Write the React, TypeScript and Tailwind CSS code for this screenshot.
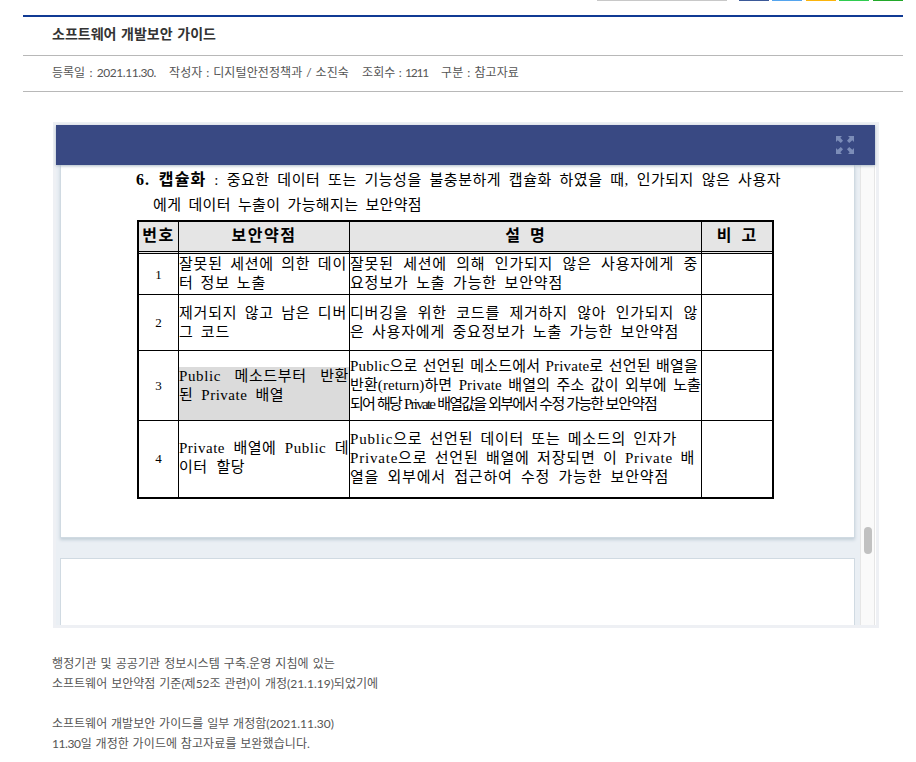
import type { ReactNode } from 'react';

function Line({ className = '', children }: { className?: string; children: ReactNode }) {
  return <div className={`whitespace-nowrap text-justify [text-align-last:justify] ${className}`}>{children}</div>;
}

function Heading({ children }: { children: ReactNode }) {
  return (
    <div className="flex items-center justify-center border-r border-b-3 border-r-black [border-bottom-style:double] border-b-black bg-[#e5e5e5] pb-0.5 text-[16px] font-bold last:border-r-0">
      {children}
    </div>
  );
}

const cell = 'flex flex-col justify-center border-r border-b border-black';
const lastCell = 'border-b border-black';

function ExpandIcon() {
  return (
    <svg width="18" height="18" viewBox="0 0 18 18" fill="#7c8db8">
      <path d="M0 0h6L4.3 1.7 7 4.8 4.8 7 1.7 4.3 0 6z" />
      <path d="M18 0v6l-1.7-1.7L13.2 7 11 4.8l2.7-3.1L12 0z" />
      <path d="M0 18v-6l1.7 1.7L4.8 11 7 13.2l-2.7 3.1L6 18z" />
      <path d="M18 18h-6l1.7-1.7-2.7-3.1 2.2-2.2 3.1 2.7L18 12z" />
    </svg>
  );
}

export default function App() {
  return (
    <div className="h-[762px] w-[916px] overflow-hidden bg-white font-['Lato','Noto_Sans_CJK_KR',sans-serif] text-[#555]">
      <div className="flex h-[15px] items-start pl-[597px]">
        <div className="mr-3 h-px w-[130px] bg-[#c8c8c8]" />
        <div className="mr-[3px] h-px w-[30px] bg-[#3b5998]" />
        <div className="mr-1 h-px w-[30px] bg-[#55a5ee]" />
        <div className="mr-[3px] h-px w-[30px] bg-[#fbb40c]" />
        <div className="mr-1 h-px w-[30px] bg-[#2fcc50]" />
        <div className="h-px w-[30px] bg-[#22a82a]" />
      </div>
      <header className="ml-[23px] w-[880px] border-t-2 border-[#103a94]">
        <h1 className="flex h-[39px] items-center border-b border-[#b8b8b8] pb-[5px] pl-[29px] text-[14px] font-bold text-[#333]">
          <Line className="w-[164px]">소프트웨어 개발보안 가이드</Line>
        </h1>
        <div className="flex h-9 items-center border-b border-[#b8b8b8] pb-0.5 pl-[29px] text-[12px]">
          <Line className="mr-[13px] w-[104px]">등록일 : <span className="tracking-[-0.45px]">2021.11.30.</span></Line>
          <Line className="mr-[13px] w-[180px] tracking-[0.1px]">작성자 : 디지털안전정책과 / 소진숙</Line>
          <Line className="mr-[13px] w-[66px] tracking-[0.1px]">조회수 : <span className="tracking-[-1.2px]">1211</span></Line>
          <Line className="w-[78px] tracking-[0.1px]">구분 : 참고자료</Line>
        </div>
      </header>

      <main className="mt-[30px] ml-[53px] h-[506px] w-[826px] border-3 border-[#eef0f4] bg-[#eaeff4]">
        <div className="relative z-10 flex h-10 w-[819px] items-center justify-end bg-[#394983] pr-[21px] shadow-[0_1px_3px_#a9b8c4]">
          <ExpandIcon />
        </div>
        <div className="flex h-[460px]">
          <div className="h-full w-[804px] overflow-hidden bg-[#eaeff4] pl-1">
            <section className="h-[373px] w-[795px] border border-t-0 border-[#d0dae2] bg-white pt-1 pl-[76px] font-['Liberation_Serif','Noto_Sans_CJK_KR',serif] text-[15px] leading-[19px] text-black shadow-[0_2px_3px_#c3cfd8]">
              <Line className="ml-[-1px] h-[25px] w-[645px] leading-[22px] tracking-[0.5px]">
                <b className="text-[16px] tracking-[1.1px]">6. 캡슐화</b> : 중요한 데이터 또는 기능성을 불충분하게 캡슐화 하였을 때, 인가되지 않은 사용자
              </Line>
              <Line className="ml-4 h-[26px] w-[269px] leading-[22px] tracking-[0.35px]">에게 데이터 누출이 가능해지는 보안약점</Line>
              <div className="grid h-[279px] w-[637px] grid-cols-[40px_171px_352px_70px] grid-rows-[32px_41px_56px_70px_76px] border-2 border-black">
                <Heading><span className="tracking-[1.5px]">번호</span></Heading>
                <Heading><span className="tracking-[1.5px]">보안약점</span></Heading>
                <Heading><span className="tracking-[1px] [word-spacing:4px]">설 명</span></Heading>
                <div className="flex items-center justify-center border-b-3 border-black [border-bottom-style:double] bg-[#e5e5e5] pb-0.5 text-[16px] font-bold">
                  <span className="tracking-[1px] [word-spacing:4px]">비 고</span>
                </div>

                <div className={`${cell} items-center text-[13px]`}>1</div>
                <div className={cell}>
                  <Line className="w-[168px] tracking-[0.8px]">잘못된 세션에 의한 데이</Line>
                  <Line className="w-[87px] tracking-[0.8px]">터 정보 노출</Line>
                </div>
                <div className={cell}>
                  <Line className="w-[348px] tracking-[0.8px]">잘못된 세션에 의해 인가되지 않은 사용자에게 중</Line>
                  <Line className="w-[213px] tracking-[0.8px]">요정보가 노출 가능한 보안약점</Line>
                </div>
                <div className={lastCell} />

                <div className={`${cell} items-center text-[13px]`}>2</div>
                <div className={cell}>
                  <Line className="w-[168px] tracking-[0.8px]">제거되지 않고 남은 디버</Line>
                  <Line className="w-[51px] tracking-[0.8px]">그 코드</Line>
                </div>
                <div className={cell}>
                  <Line className="w-[348px] tracking-[0.8px]">디버깅을 위한 코드를 제거하지 않아 인가되지 않</Line>
                  <Line className="w-[329px] tracking-[0.8px]">은 사용자에게 중요정보가 노출 가능한 보안약점</Line>
                </div>
                <div className={lastCell} />

                <div className={`${cell} items-center text-[13px]`}>3</div>
                <div className={`${cell} bg-[linear-gradient(#fff_16px,#dbdbdb_16px)]`}>
                  <Line className="w-[170px] tracking-[0.6px]">Public 메소드부터 반환</Line>
                  <Line className="w-[105px] tracking-[0.5px]">된 Private 배열</Line>
                </div>
                <div className={cell}>
                  <Line className="w-[348px] tracking-[0.2px]">Public으로 선언된 메소드에서 Private로 선언된 배열을</Line>
                  <Line className="w-[351px] tracking-[0.1px]">반환(return)하면 Private 배열의 주소 값이 외부에 노출</Line>
                  <Line className="w-[307px] tracking-[-1.75px]">되어 해당 Private 배열값을 외부에서 수정 가능한 <span className="tracking-[-0.9px]">보안약점</span></Line>
                </div>
                <div className={lastCell} />

                <div className={`${cell} items-center border-b-0 pb-0.5 text-[13px]`}>4</div>
                <div className={`${cell} border-b-0 pb-0.5`}>
                  <Line className="w-[170px] tracking-[0.5px]">Private 배열에 Public 데</Line>
                  <Line className="w-[66px] tracking-[0.5px]">이터 할당</Line>
                </div>
                <div className={`${cell} border-b-0 pb-0.5`}>
                  <Line className="w-[327px] tracking-[0.8px]">Public으로 선언된 데이터 또는 메소드의 인자가</Line>
                  <Line className="w-[345px] tracking-[0.8px]">Private으로 선언된 배열에 저장되면 이 Private 배</Line>
                  <Line className="w-[319px] tracking-[0.8px]">열을 외부에서 접근하여 수정 가능한 보안약점</Line>
                </div>
                <div />
              </div>
            </section>
            <section className="mt-5 h-20 w-[795px] border border-[#d0dae2] bg-white" />
          </div>
          <div className="h-full w-[15px] border-x border-[#e6e6e6] bg-[#fafafa] pt-[362px] pl-[3px]">
            <div className="h-[27px] w-2 rounded-full bg-[#c1c1c1]" />
          </div>
          <div className="h-full w-px bg-white" />
        </div>
      </main>

      <article className="mt-[26px] ml-[52px] text-[12px] leading-5">
        <Line className="w-[283px] tracking-[0.1px]">행정기관 및 공공기관 정보시스템 구축.운영 지침에 있는</Line>
        <Line className="w-[326px]">소프트웨어 보안약점 기준(제52조 관련)이 개정(21.1.19)되었기에</Line>
        <Line className="mt-5 w-[282px]">소프트웨어 개발보안 가이드를 일부 개정함(2021.11.30)</Line>
        <Line className="w-[258px] tracking-[0.1px]"><span className="tracking-[-0.4px]">11.30</span>일 개정한 가이드에 참고자료를 보완했습니다.</Line>
      </article>
    </div>
  );
}
